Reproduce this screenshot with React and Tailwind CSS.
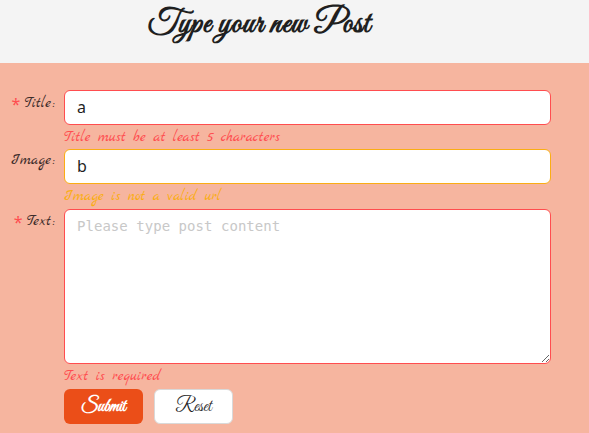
import React from 'react';

const script = "font-['Great_Vibes','Liberation_Serif',cursive]";
const hand = "font-['Marck_Script','Liberation_Serif',cursive] text-[15px] tracking-[0.17px] whitespace-nowrap";
const input = "h-[35px] w-full rounded-[6px] border bg-white px-3 pb-[2px] font-['Noto_Sans',sans-serif] text-[16px] text-[#1f1f1f] outline-none";

function Field({ label, required, error, errorClass, children }) {
  return (
    <div className="flex items-start">
      <label className={`${hand} flex w-[56px] shrink-0 justify-end pr-px leading-[24px] text-[#3b2b2a] ${required ? 'pt-[2px]' : ''}`}>
        {required && (
          <span className="mr-[4px] font-['Noto_Sans',sans-serif] text-[16px] text-[#ff4d4f]">*</span>
        )}
        <span>
          {label}
          <span className="ml-[2px]">:</span>
        </span>
      </label>
      <div className="ml-2 flex w-[487px] flex-col">
        {children}
        <div className={`${hand} h-[24px] leading-[25px] ${errorClass}`}>{error}</div>
      </div>
    </div>
  );
}

export default function App() {
  return (
    <div className="flex h-[433px] w-[589px] flex-col overflow-hidden bg-[#f6b59f]">
      <header className="h-[63px] shrink-0 bg-[#f4f4f4] pl-[148px] pt-[2px]">
        <h1 className={`${script} whitespace-nowrap text-[32px] font-bold leading-[46px] tracking-[0.85px] text-[#1f1f1f]`}>
          Type your new Post
        </h1>
      </header>
      <form className="flex flex-col pt-[27px]" noValidate onSubmit={(e) => e.preventDefault()}>
        <Field label="Title" required error="Title must be at least 5 characters" errorClass="text-[#ff4d4f]">
          <input defaultValue="a" className={`${input} border-[#ff4d4f]`} />
        </Field>
        <Field label="Image" error="Image is not a valid url" errorClass="text-[#faad14]">
          <input defaultValue="b" className={`${input} border-[#faad14]`} />
        </Field>
        <Field label="Text" required error="Text is required" errorClass="text-[#ff4d4f]">
          <textarea
            placeholder="Please type post content"
            className="mt-px block h-[155px] w-full resize rounded-[6px] border border-[#ff4d4f] bg-white px-3 py-[6px] font-['DejaVu_Sans_Mono',monospace] text-[14px] leading-[20px] tracking-[0.04px] outline-none placeholder:text-[#c8c8c8]"
          />
        </Field>
        <div className="ml-[64px] mt-px flex gap-[11px]">
          <button type="submit" className={`${script} h-[35px] w-[79px] rounded-[6px] bg-[#eb4e18] text-[18px] font-bold leading-none text-white`}>
            Submit
          </button>
          <button type="reset" className={`${script} h-[35px] w-[79px] rounded-[6px] border border-[#d9d9d9] bg-white text-[18px] leading-none text-[#1f1f1f]`}>
            Reset
          </button>
        </div>
      </form>
    </div>
  );
}
